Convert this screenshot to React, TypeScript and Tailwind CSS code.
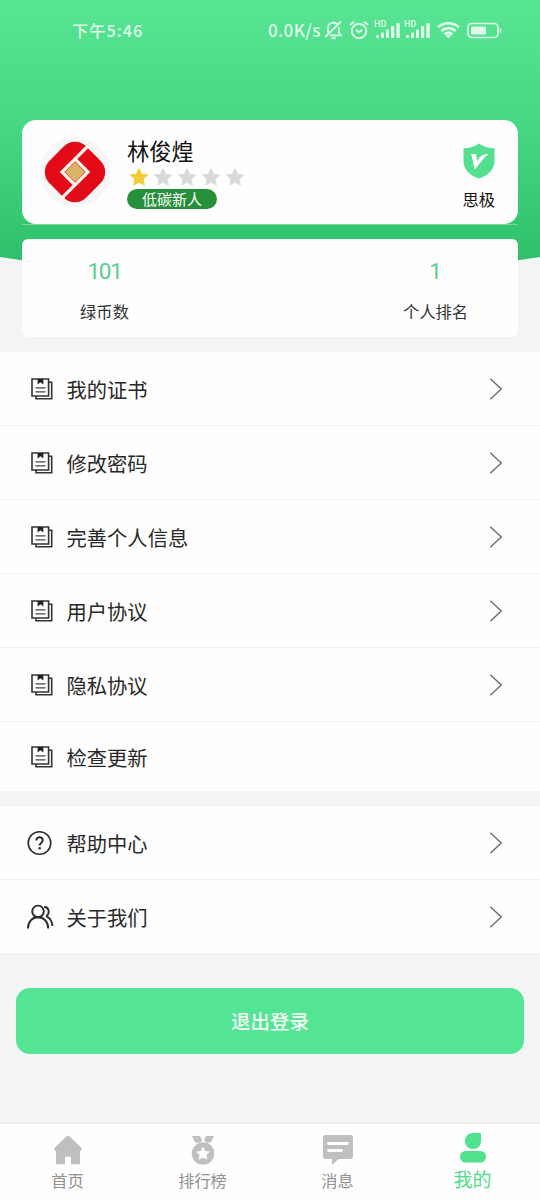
import React from "react";

const BookIcon = () => (
  <svg className="ml-[2px]" width="22" height="22" viewBox="0 0 22 22" fill="none" stroke="#333" strokeWidth="1.6">
    <path d="M1 1h16.600v17H1z" />
    <path d="M17.600 4.300h3.100v16.400H5v-2.700" />
    <path d="M4.500 9.900h10M4.500 13.900h10" stroke="#444" strokeWidth="1.400" />
    <path d="M6.600 1h5.700v5.400L9.450 4.200 6.600 6.400z" fill="#222" stroke="none" />
  </svg>
);

const HelpIcon = () => (
  <svg className="mr-[2px]" width="26" height="26" viewBox="0 0 26 26" fill="none" stroke="#2b2b2b" strokeWidth="1.700">
    <circle cx="13" cy="13" r="11.700" />
    <path d="M9.700 10.300c0-4.400 6.700-4.200 6.700-.2 0 2.500-3.200 2.700-3.200 5.400" strokeWidth="2" />
    <circle cx="13.200" cy="18.500" r="1.300" fill="#2b2b2b" stroke="none" />
  </svg>
);

const PeopleIcon = () => (
  <svg width="27" height="26" viewBox="0 0 27 26" fill="none" stroke="#2b2b2b" strokeWidth="1.900">
    <circle cx="11" cy="7.400" r="5.800" />
    <path d="M1 24.400c0-6.500 4-11.200 10-11.200s10.200 4.700 10.200 11.200" />
    <path d="M17.200 3c4.600-.2 6.400 6.100 1.900 9.500M19.600 12.300c3.700 1.700 5.500 4.600 5.900 9.700" />
  </svg>
);

const Chevron = () => (
  <svg width="14" height="24" viewBox="0 0 14 24" fill="none" stroke="#6c6c6c" strokeWidth="1.400">
    <path d="M1.300 1.700 12.300 12 1.300 22.300" />
  </svg>
);

const Signal = () => (
  <div className="relative h-[20px] w-[26px]">
    <span className="absolute top-0 left-[-1px] font-['Roboto',sans-serif] text-[9px] leading-[9px] font-medium">HD</span>
    <svg width="26" height="20" viewBox="0 0 26 20" fill="currentColor">
      <rect x="1" y="15" width="3" height="3" rx="1" />
      <rect x="6" y="12.500" width="3" height="5.500" rx="1" />
      <rect x="11" y="9.500" width="3" height="8.500" rx="1" />
      <rect x="16" y="6" width="3.200" height="12" rx="1" />
      <rect x="21.300" y="3" width="3.400" height="15" rx="1" />
    </svg>
  </div>
);

const StatusBar = () => (
  <div className="flex h-[60px] items-center justify-between pr-[38px] pl-[72px] text-[#e0fbea]">
    <span className="text-[16.300px] font-medium tracking-[1px]">下午5:46</span>
    <div className="flex items-center">
      <span className="mr-[2px] w-[54px] text-[17px] font-medium tracking-[0.400px] whitespace-nowrap">0.0K/s</span>
      <svg className="mr-[6px]" width="19" height="20" viewBox="0 0 19 20" fill="none" stroke="currentColor" strokeWidth="1.800">
        <path d="M4 12.500V8c0-6.500 8-6.500 10-2.500M15 7v6l2 2.300H6M1.300 17 17 1.500" />
        <path d="M7.500 18.200h4" strokeWidth="2" />
      </svg>
      <svg className="mr-[6px]" width="20" height="20" viewBox="0 0 20 20" fill="none" stroke="currentColor" strokeWidth="2">
        <circle cx="10" cy="11" r="7.200" />
        <path d="m1 5 4-3.500M19 5l-4-3.500M6.800 9.800 10 12.300l3.200-2.500" />
      </svg>
      <div className="mr-[4px]"><Signal /></div>
      <div className="mr-[6px]"><Signal /></div>
      <svg className="mr-[7px]" width="23" height="18" viewBox="0 0 23 18" fill="none" stroke="currentColor" strokeWidth="2.600">
        <path d="M1 6.300c6-5.500 15-5.500 21 0M4.300 10c4.200-3.800 10.200-3.800 14.400 0M7.500 13.200c2.400-2 5.600-2 8 0" />
        <path d="m8.700 14.500 2.800 3 2.800-3c-1.600-1.300-4-1.300-5.600 0z" fill="currentColor" stroke="none" />
      </svg>
      <svg width="35" height="17" viewBox="0 0 35 17" fill="none" stroke="currentColor" strokeWidth="1.700">
        <rect x="1" y="1.500" width="30" height="14" rx="4" />
        <rect x="4" y="4.500" width="15" height="8" rx="1" fill="currentColor" stroke="none" />
        <path d="M33.500 6.500v4" />
      </svg>
    </div>
  </div>
);

const Logo = () => (
  <div className="flex size-[70px] items-center justify-center rounded-full bg-[#f6f6f7]">
    <svg width="62" height="62" viewBox="0 0 62 62">
      <rect x="5" y="5" width="52" height="52" rx="16" fill="#e20a17" transform="rotate(45 31 31)" />
      <path d="M46 3 18 31 31 44M16 59 44 31 31 18" fill="none" stroke="#fff3ed" strokeWidth="3.200" strokeLinecap="square" />
      <path d="M31 21 41 31 31 41 21 31z" fill="#d9b567" />
    </svg>
  </div>
);

const Star = ({ on }: { on?: boolean }) => (
  <svg width="20" height="20" viewBox="0 0 20 20" fill={on ? "#f3cb35" : "#dadada"} stroke={on ? "#f3cb35" : "#dadada"} strokeWidth="1" strokeLinejoin="round">
    <path d="m10 1.700 2.600 5.600 6 .7-4.500 4.100 1.200 6-5.300-3-5.300 3 1.200-6L1.400 8l6-.7z" />
  </svg>
);

const Shield = () => (
  <svg width="32" height="36" viewBox="0 0 32 36">
    <path d="M16 .5c4.500 3.200 9 4.700 15.500 4.800V18c0 8-6 14.500-15.500 17.500C6.500 32.500.5 26 .5 18V5.300C7 5.200 11.500 3.700 16 .5z" fill="#54df8e" />
    <path d="M8.200 11h4.800l1.200 7.500c2-5 4.800-7.500 11.300-7.500-5.500 4-8 9.500-13.800 15.500z" fill="#fff" />
  </svg>
);

const Row = ({ label, icon, arrow = true, last, className = "h-[74px]" }: {
  label: string; icon: React.ReactNode; arrow?: boolean; last?: boolean; className?: string;
}) => (
  <div className={`flex items-center bg-[#fefefe] pr-[37px] pl-[27px] ${last ? "" : "border-b border-[#f0f1f2]"} ${className}`}>
    <span className="flex w-[27px] justify-center">{icon}</span>
    <span className="ml-[12.500px] flex-1 pt-[2px] text-[20.300px] text-[#282828]">{label}</span>
    {arrow && <Chevron />}
  </div>
);

const menu = ["我的证书", "修改密码", "完善个人信息", "用户协议", "隐私协议"];

const TabBar = () => (
  <nav className="grid h-[78px] grid-cols-4 border-t-2 border-[#eeefef] bg-[#fefefe] text-[16.200px] text-[#919191]">
    <div className="flex flex-col items-center pt-[12px]">
      <svg width="28" height="29" viewBox="0 0 28 29" fill="#bfbfbf">
        <path d="M14 0c.8 0 1.400.3 2 .8l10.800 10.500c1.700 1.600.7 3.700-.8 3.700V27c0 .8-.5 1.300-1.300 1.300H17v-7.500h-6v7.500H3.300c-.8 0-1.300-.5-1.300-1.300V15c-1.500 0-2.500-2.100-.8-3.700L12 .8c.6-.5 1.200-.8 2-.8z" />
      </svg>
      <span className="mt-[3px] leading-[24px]">首页</span>
    </div>
    <div className="flex flex-col items-center pt-[11px]">
      <svg width="24" height="30" viewBox="0 0 24 30" fill="#bfbfbf">
        <path d="M1 1h8l2.300 4.200L9 7.500H4zM15 1h8l-3 6.500h-5l-2-2.300z" />
        <circle cx="12" cy="18.500" r="11.200" />
        <path d="m12 11.500 2.100 4.500 4.900.6-3.600 3.400 1 4.900-4.400-2.500-4.400 2.500 1-4.900L5 16.600l4.900-.6z" fill="#fefefe" />
      </svg>
      <span className="mt-[3px] leading-[24px]">排行榜</span>
    </div>
    <div className="flex flex-col items-center pt-[11px]">
      <svg width="30" height="30" viewBox="0 0 30 30" fill="#bfbfbf">
        <path d="M2.500 0h25C29 0 30 1 30 2.500v19c0 1.500-1 2.500-2.500 2.500H15.500L9 30v-6H2.500C1 24 0 23 0 21.500v-19C0 1 1 0 2.500 0z" />
        <path d="M5.500 8.500h19M5.500 15.500h13" stroke="#fefefe" strokeWidth="2.800" strokeLinecap="round" />
      </svg>
      <span className="mt-[3px] leading-[24px]">消息</span>
    </div>
    <div className="flex flex-col items-center pt-[9px] text-[19px] text-[#50dc8b]">
      <svg width="26" height="30" viewBox="0 0 26 30" fill="#50e28f">
        <path d="M13 0h6.500c1 0 1.500.5 1.500 1.500V8c0 4.600-3.400 8-8 8s-8-3.400-8-8 3.400-8 8-8z" />
        <rect x="0" y="18" width="26" height="11.500" rx="5.500" />
      </svg>
      <span className="mt-[3px] leading-[26px]">我的</span>
    </div>
  </nav>
);

export default function App() {
  return (
    <div className="flex h-[1200px] w-[540px] flex-col overflow-hidden bg-[#f3f4f5] font-['Noto_Sans_CJK_SC',sans-serif]">
      <header className="relative h-[351px] shrink-0">
        <div className="absolute inset-x-0 top-0 h-[276px] bg-linear-to-b from-[#58e594] via-[#46d883] via-45% to-[#2cbd67] [clip-path:polygon(0_257px,0_0,100%_0,100%_257px,85%_269px,50%_276px,15%_269px)]" />
        <div className="relative">
          <StatusBar />
          <section className="mx-[22px] mt-[60px] flex h-[104px] rounded-[14px] bg-[#fefefe] pr-[23px] pl-[18px]">
            <div className="pt-[17px]"><Logo /></div>
            <div className="ml-[17px] flex flex-1 flex-col items-start pt-[14px]">
              <h1 className="text-[22.300px] leading-[32px] text-[#111]">林俊煌</h1>
              <div className="mt-[1px] flex gap-[4px] pl-[2px]">
                <Star on /><Star /><Star /><Star /><Star />
              </div>
              <span className="mt-[2px] flex h-[20px] w-[90px] items-center justify-center rounded-full bg-[#259039] pt-px text-[15px] text-white">低碳新人</span>
            </div>
            <div className="flex flex-col items-center pt-[23px]">
              <Shield />
              <span className="mt-[8px] text-[16.300px] leading-[24px] text-[#111]">思极</span>
            </div>
          </section>
          <div className="mx-[22px] h-px bg-[#7ad99e]" />
          <section className="mx-[22px] mt-[14px] flex h-[98px] justify-between rounded-[6px] bg-[#fefefe] text-center">
            <div className="w-[165px] pt-[17px]">
              <div className="font-['Roboto',sans-serif] text-[22.500px] leading-[30px] tracking-[-1.300px] text-[#58cf8e]">101</div>
              <div className="mt-[13px] text-[16.300px] leading-[24px] text-[#333]">绿币数</div>
            </div>
            <div className="w-[165px] pt-[17px]">
              <div className="font-['Roboto',sans-serif] text-[22.500px] leading-[30px] text-[#58cf8e]">1</div>
              <div className="mt-[13px] text-[16.300px] leading-[24px] text-[#333]">个人排名</div>
            </div>
          </section>
        </div>
      </header>
      <section className="-mb-px pt-px">
        {menu.map((label) => <Row key={label} label={label} icon={<BookIcon />} />)}
        <Row label="检查更新" icon={<BookIcon />} arrow={false} last className="h-[69px]" />
      </section>
      <section className="mt-[16px]">
        <Row label="帮助中心" icon={<HelpIcon />} />
        <Row label="关于我们" icon={<PeopleIcon />} last className="h-[73px]" />
      </section>
      <div className="flex flex-1 flex-col px-[16px] pt-[35px]">
        <button className="h-[66px] rounded-[14px] bg-[#53e594] text-[19.500px] font-medium text-[#f4fff8]">退出登录</button>
      </div>
      <TabBar />
    </div>
  );
}
